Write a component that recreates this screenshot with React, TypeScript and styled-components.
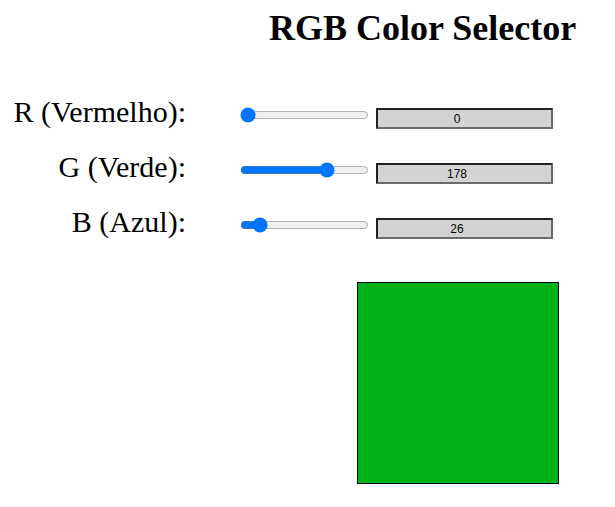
import React, { useState } from "react";
import styled, { createGlobalStyle } from "styled-components";

const Global = createGlobalStyle`
  body { margin: 8px; background: #fff; font-family: "Liberation Serif", "Times New Roman", serif; color: #000; }
`;

const Page = styled.div`
  display: flex;
  flex-direction: column;
`;

const Title = styled.h1`
  margin: 0 0 0 261px;
  font-size: 36px;
  font-weight: bold;
  line-height: 41px;
`;

const Rows = styled.div`
  display: grid;
  grid-template-columns: 178px 190px 177px;
  grid-auto-rows: 55px;
  margin-top: 39px;
`;

const Row = styled.div`
  display: contents;
`;

const Label = styled.label`
  font-size: 30px;
  line-height: 34px;
  text-align: right;
  align-self: start;
  margin-top: 7px;
  white-space: nowrap;
`;

const Slider = styled.input`
  margin: 19px 0 0 54px;
  width: 129px;
  height: 16px;
  align-self: start;
`;

const Value = styled.input`
  box-sizing: border-box;
  margin: 20px 0 0 0;
  width: 177px;
  height: 21px;
  align-self: start;
  background: #d3d3d3;
  border: 2px solid;
  border-color: #222 #6b6b6b #6b6b6b #222;
  font-family: "Liberation Sans", Arial, sans-serif;
  font-size: 12px;
  text-align: center;
  padding: 0 15px 0 0;
  color: #000;
`;

const Swatch = styled.div<{ $color: string }>`
  margin: 29px 0 0 349px;
  width: 200px;
  height: 200px;
  border: 1px solid #000;
  background: ${(p) => p.$color};
`;

export default function App() {
  const [r, setR] = useState(0);
  const [g, setG] = useState(178);
  const [b, setB] = useState(26);
  const channels: [string, number, (v: number) => void][] = [
    ["R (Vermelho):", r, setR],
    ["G (Verde):", g, setG],
    ["B (Azul):", b, setB],
  ];
  return (
    <Page>
      <Global />
      <Title>RGB Color Selector</Title>
      <Rows>
        {channels.map(([label, v, set]) => (
          <Row key={label}>
            <Label>{label}</Label>
            <Slider type="range" min={0} max={255} value={v} onChange={(e) => set(Number(e.target.value))} />
            <Value type="text" value={v} readOnly />
          </Row>
        ))}
      </Rows>
      <Swatch $color={`rgb(${r}, ${g}, ${b})`} />
    </Page>
  );
}
